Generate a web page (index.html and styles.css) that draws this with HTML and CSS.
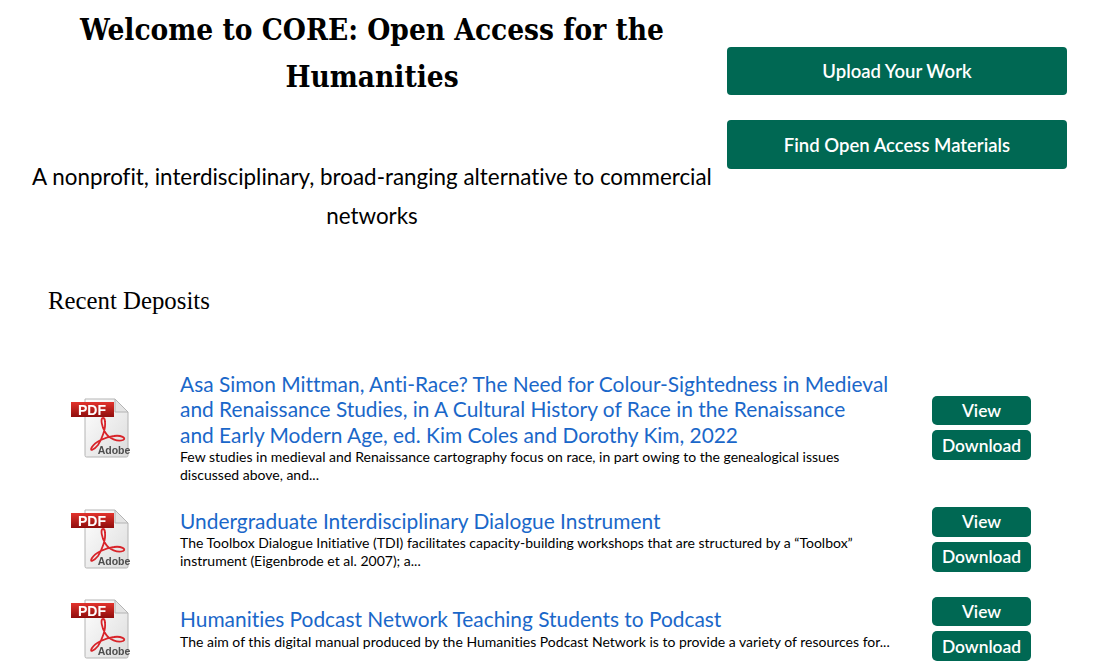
FILE: index.html
```html
<!DOCTYPE html>
<html>
<head>
  <meta charset="utf-8">
  <title>CORE: Open Access for the Humanities</title>
  <link rel="stylesheet" href="styles.css">
</head>
<body>
  <svg class="sprite" width="0" height="0">
    <defs>
      <linearGradient id="pdfBand" x1="0" y1="0" x2="0" y2="1">
        <stop offset="0" stop-color="#e2332c"/>
        <stop offset="1" stop-color="#8f0d0d"/>
      </linearGradient>
      <linearGradient id="pdfPage" x1="0" y1="0" x2="1" y2="1">
        <stop offset="0" stop-color="#ffffff"/>
        <stop offset="1" stop-color="#dcdcdc"/>
      </linearGradient>
      <symbol id="pdfIcon" viewBox="0 0 60 60">
        <path d="M14 1H44L57 14V57.5Q57 59 55.5 59H15.5Q14 59 14 57.5Z" fill="url(#pdfPage)" stroke="#b4b4b4"/>
        <path d="M44 1V14H57Z" fill="#e4e4e4" stroke="#b4b4b4"/>
        <path d="M32 20C29 20 31 29 34 34C38 41 47 44 52 42C56 40 50 37 43 38C34 39 24 44 21 49C18 54 23 52 27 47C31 41 35 30 34 24C34 21 33 20 32 20Z" fill="none" stroke="#d8242a" stroke-width="1.8"/>
        <rect x="0" y="4" width="43" height="15" fill="url(#pdfBand)"/>
        <text class="pdf-label" x="21" y="16.5">PDF</text>
        <text class="pdf-brand" x="43" y="56">Adobe</text>
      </symbol>
    </defs>
  </svg>

  <div class="hero">
    <div class="hero-text">
      <h1>Welcome to CORE: Open Access for the Humanities</h1>
      <p class="tagline">A nonprofit, interdisciplinary, broad-ranging alternative to commercial networks</p>
    </div>
    <div class="hero-actions">
      <a class="action-button" href="#">Upload Your Work</a>
      <a class="action-button" href="#">Find Open Access Materials</a>
    </div>
  </div>

  <h2 class="section-title">Recent Deposits</h2>

  <div class="deposits">
    <div class="deposit">
      <svg class="pdf-icon"><use href="#pdfIcon"/></svg>
      <div class="deposit-info">
        <a class="deposit-title" href="#">Asa Simon Mittman, Anti-Race? The Need for Colour-Sightedness in Medieval and Renaissance Studies, in A Cultural History of Race in the Renaissance and&nbsp;Early Modern Age, ed. Kim Coles and Dorothy Kim, 2022</a>
        <p class="deposit-summary">Few studies in medieval and Renaissance cartography focus on race, in part owing to the genealogical issues discussed above, and...</p>
      </div>
      <div class="deposit-actions">
        <a class="small-button" href="#">View</a>
        <a class="small-button" href="#">Download</a>
      </div>
    </div>

    <div class="deposit">
      <svg class="pdf-icon"><use href="#pdfIcon"/></svg>
      <div class="deposit-info">
        <a class="deposit-title" href="#">Undergraduate Interdisciplinary Dialogue Instrument</a>
        <p class="deposit-summary">The Toolbox Dialogue Initiative (TDI) facilitates capacity-building workshops that are structured by a “Toolbox” instrument (Eigenbrode et al. 2007); a...</p>
      </div>
      <div class="deposit-actions">
        <a class="small-button" href="#">View</a>
        <a class="small-button" href="#">Download</a>
      </div>
    </div>

    <div class="deposit deposit-last">
      <svg class="pdf-icon"><use href="#pdfIcon"/></svg>
      <div class="deposit-info">
        <a class="deposit-title" href="#">Humanities Podcast Network Teaching Students to Podcast</a>
        <p class="deposit-summary">The aim of this digital manual produced by the Humanities Podcast Network is to provide a variety of resources for...</p>
      </div>
      <div class="deposit-actions">
        <a class="small-button" href="#">View</a>
        <a class="small-button" href="#">Download</a>
      </div>
    </div>
  </div>
</body>
</html>
```

FILE: styles.css
```css
body {
  font-family: Lato, 'Noto Sans', sans-serif;
  font-variant-ligatures: none;
  margin: 0;
  color: #000;
  background: #fff;
  overflow: hidden;
}

a {
  text-decoration: none;
}

.sprite {
  position: absolute;
}

/* Top block */
.hero {
  display: flex;
  padding-left: 32px;
}

.hero-text {
  width: 680px;
  text-align: center;
}

.hero-text h1 {
  margin: 6px 0 0 0;
  font-family: 'DejaVu Serif Condensed', 'DejaVu Serif', serif;
  font-stretch: condensed;
  font-size: 29.5px;
  font-weight: 700;
  line-height: 47px;
}

.tagline {
  margin: 57px 0 0 0;
  font-size: 22.4px;
  line-height: 39px;
}

.hero-actions {
  margin-left: 15px;
  padding-top: 47px;
  display: flex;
  flex-direction: column;
  gap: 25px;
}

.action-button {
  width: 340px;
  height: 48.4px;
  display: flex;
  align-items: center;
  justify-content: center;
  background: #006853;
  color: #fff;
  border-radius: 4px;
  font-size: 18.5px;
  font-weight: 600;
}

.section-title {
  margin: 51px 0 0 48px;
  font-family: 'Liberation Serif', serif;
  font-size: 24.8px;
  font-weight: 400;
  line-height: 30px;
}

/* Deposit list */
.deposits {
  margin-top: 55.5px;
  padding-left: 71px;
  display: flex;
  flex-direction: column;
  gap: 23px;
}

.deposit {
  display: flex;
  align-items: center;
}

.deposit-last {
  margin-top: 2px;
}

.pdf-icon {
  width: 60px;
  height: 60px;
  flex: none;
  filter: blur(0.35px);
}

.pdf-label {
  font-family: 'Liberation Sans', sans-serif;
  font-size: 14px;
  font-weight: 700;
  fill: #fff;
  text-anchor: middle;
}

.pdf-brand {
  font-family: 'Liberation Sans', sans-serif;
  font-size: 10.5px;
  font-weight: 700;
  fill: #4d4d4d;
  text-anchor: middle;
}

.deposit-info {
  width: 712px;
  margin-right: 8px;
  margin-left: 49px;
}

.deposit-title {
  display: block;
  margin: -1px 0 1px 0;
  color: #1a67c9;
  font-size: 20.9px;
  line-height: 25.5px;
}

.deposit-summary {
  margin: 0;
  font-size: 14px;
  line-height: 18px;
}

.deposit-actions {
  margin-left: 32px;
  display: flex;
  flex-direction: column;
  gap: 5px;
}

.small-button {
  width: 99px;
  height: 29.75px;
  display: flex;
  align-items: center;
  justify-content: center;
  background: #006853;
  color: #fff;
  border-radius: 5px;
  font-size: 17.4px;
  font-weight: 600;
}
```
